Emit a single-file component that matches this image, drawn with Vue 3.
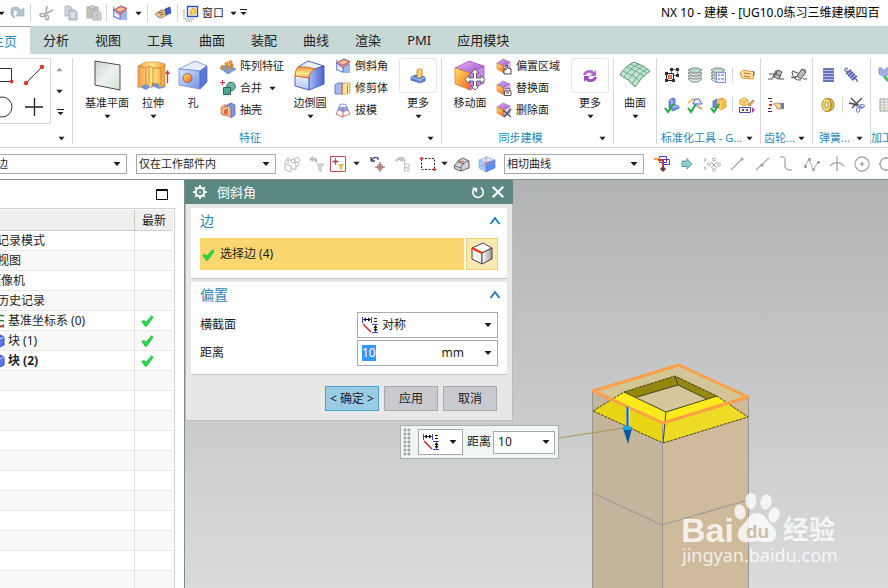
<template>
  <div class="nx">
    <svg class="defs" width="0" height="0" aria-hidden="true">
      <defs>
        <linearGradient id="gBlue" x1="0" y1="0" x2="1" y2="1"><stop offset="0" stop-color="#dbe8ff" /><stop offset="1" stop-color="#6f90e4" /></linearGradient>
        <linearGradient id="gPale" x1="0" y1="0" x2="0" y2="1"><stop offset="0" stop-color="#eaf2ff" /><stop offset="1" stop-color="#b4c6ec" /></linearGradient>
        <linearGradient id="gDeep" x1="0" y1="0" x2="1" y2="0"><stop offset="0" stop-color="#a9bdf8" /><stop offset="1" stop-color="#4664d0" /></linearGradient>
        <linearGradient id="gGold" x1="0" y1="0" x2="1" y2="0"><stop offset="0" stop-color="#f79a4a" /><stop offset=".5" stop-color="#ffe98a" /><stop offset="1" stop-color="#f0a038" /></linearGradient>
        <linearGradient id="gStrip" x1="0" y1="0" x2="0" y2="1"><stop offset="0" stop-color="#f5934e" /><stop offset=".6" stop-color="#ffec8a" /><stop offset="1" stop-color="#f7a04c" /></linearGradient>
        <linearGradient id="gFire" x1="0" y1="0" x2="1" y2="1"><stop offset="0" stop-color="#ffe45a" /><stop offset="1" stop-color="#f2642c" /></linearGradient>
        <linearGradient id="gPurple" x1="0" y1="0" x2="1" y2="1"><stop offset="0" stop-color="#e0b0f0" /><stop offset="1" stop-color="#a259c8" /></linearGradient>
        <linearGradient id="gPlane" x1="0" y1="0" x2="1" y2="1"><stop offset="0" stop-color="#c9d6cd" /><stop offset=".5" stop-color="#eef0f0" /><stop offset="1" stop-color="#cfe6d4" /></linearGradient>
        <linearGradient id="gCube" x1="0" y1="0" x2="1" y2="0"><stop offset="0" stop-color="#fff" /><stop offset="1" stop-color="#999" /></linearGradient>
      </defs>
    </svg>

    <header class="quick-bar">
      <div class="quick-tools">
        <template v-for="(tool, i) in quickTools" :key="i">
          <span v-if="tool.sep" class="quick-sep"></span>
          <button v-else type="button" :class="['quick-btn', tool.cls]" :aria-label="tool.label">
            <Icon :name="tool.icon" :size="tool.size || 16" />
            <span v-if="tool.text">{{ tool.text }}</span>
          </button>
        </template>
      </div>
      <div class="app-title">NX 10 - 建模 - [UG10.0练习三维建模四百</div>
    </header>

    <nav class="tabs">
      <a v-for="tab in tabs" :key="tab" href="#" :class="['tab', { active: tab === '主页' }]"><span>{{ tab }}</span></a>
    </nav>

    <section class="ribbon">
      <div class="group">
        <div class="group-body">
          <div class="gallery">
            <button v-for="g in ['rect', 'line', 'circle', 'plus']" :key="g" type="button" :aria-label="g"><Icon :name="g" :size="24" /></button>
          </div>
          <div class="gallery-scroll">
            <button type="button" aria-label="up"><Icon name="up" :size="7" /></button>
            <button type="button" aria-label="down"><Icon name="down" :size="7" /></button>
            <button type="button" aria-label="all"><Icon name="downBar" :size="8" /></button>
          </div>
        </div>
        <div class="group-foot"><span></span><Icon name="down" :size="7" /></div>
      </div>

      <div v-for="group in groups" :key="group.id" :class="['group', 'group-' + group.id]">
        <div class="group-body">
          <template v-for="(part, i) in group.parts" :key="i">
            <button v-if="part.big" type="button" :class="['big', part.cls]">
              <span class="big-icon"><Icon :name="part.big" :size="part.cls === 'more' ? 16 : 32" /></span>
              <span class="big-text">{{ part.text }}</span>
              <Icon v-if="!part.plain" name="down" :size="7" />
            </button>
            <div v-else class="small-list">
              <button v-for="s in part.list" :key="s.text" type="button" class="small">
                <Icon :name="s.icon" :size="16" />
                <span>{{ s.text }}</span>
                <Icon v-if="s.drop" name="down" class="small-drop" :size="7" />
              </button>
            </div>
          </template>
        </div>
        <div v-if="group.label" class="group-foot"><span>{{ group.label }}</span><Icon name="down" :size="7" /></div>
      </div>

      <div v-for="group in miniGroups" :key="group.label" class="group mini">
        <div class="group-body mini-body">
          <div v-for="(row, r) in group.rows" :key="r" class="mini-row">
            <template v-for="name in row" :key="name">
              <span v-if="name === '|'" class="mini-sep"></span>
              <button v-else type="button" :aria-label="name"><Icon :name="name" :size="16" /></button>
            </template>
          </div>
        </div>
        <div class="group-foot"><span>{{ group.label }}</span><Icon v-if="!group.last" name="down" :size="7" /></div>
      </div>
    </section>

    <section class="select-bar">
      <div class="combo combo-filter">
        <select aria-label="类型过滤器"><option>边</option></select>
        <Icon name="down" :size="8" />
      </div>
      <div class="combo combo-scope">
        <select aria-label="选择范围"><option>仅在工作部件内</option></select>
        <Icon name="down" :size="8" />
      </div>
      <button v-for="t in selectTools" :key="t.icon + t.cls" type="button" :class="['sel-btn', t.cls]" :aria-label="t.icon">
        <Icon :name="t.icon" :size="t.icon === 'down' ? 7 : 16" />
      </button>
      <div class="combo combo-curve">
        <select aria-label="曲线规则"><option>相切曲线</option></select>
        <Icon name="down" :size="8" />
      </div>
      <button v-for="name in snapTools" :key="name" type="button" class="sel-btn" :aria-label="name"><Icon :name="name" :size="16" /></button>
    </section>

    <main class="work">
      <aside class="navigator">
        <div class="nav-head"><button type="button" class="maximize" aria-label="最大化"></button></div>
        <div class="tree">
          <table>
            <thead>
              <tr><th></th><th class="latest">最新</th></tr>
            </thead>
            <tbody>
              <tr v-for="(row, i) in treeRows" :key="i" :class="{ current: row.current }">
                <td>
                  <div :class="['node', 'level-' + (row.level || 0)]">
                    <Icon v-if="row.icon" :name="row.icon" :size="16" />
                    <span>{{ row.text }}</span>
                  </div>
                </td>
                <td class="latest"><Icon v-if="row.ok" name="check" :size="13" /></td>
              </tr>
            </tbody>
          </table>
        </div>
      </aside>

      <div class="canvas">
        <svg class="model" width="703" height="408" viewBox="185 180 703 408">
          <polygon points="593,391 663,423 663,588 593,588" fill="#c4b49c" />
          <polygon points="663,423 748,397 748,588 663,588" fill="#cfbb9b" />
          <polygon points="593,391 679,365 748,397 663,423" fill="#d3c596" />
          <polygon points="624,392 675,376 678,385 636,398" fill="#94860f" />
          <polygon points="675,376 717,396 707,399 678,385" fill="#94860f" />
          <polygon points="636,398 678,385 707,399 666,412" fill="#d5c79a" />
          <polygon points="593,411 624,392 666,412 663,443" fill="#e8d616" />
          <polygon points="663,443 666,412 717,396 748,417" fill="#eddb26" />
          <polygon points="613,399 624,392 666,412 717,396 725,402 663,423" fill="#fcea1c" />
          <g fill="none" stroke="#4a4420" stroke-width="1">
            <path d="M593 411L624 392L675 376L717 396L748 417L663 443Z" stroke-dasharray="3 1" />
            <path d="M624 392L666 412L717 396M666 412L663 443M675 376L678 385L707 399M678 385L637 397" />
          </g>
          <path d="M592.5 391V588M662.5 423V588M748.5 397V588M593 493L662 525L748 500" fill="none" stroke="#97979b" stroke-width="1" />
          <polygon points="593,391 679,365 748,397 663,423" fill="none" stroke="#fb9f48" stroke-width="3" stroke-linejoin="round" />
          <path d="M559 438L624 428" stroke="#ab9656" />
          <path d="M628 407V428" stroke="#cfe4ee" stroke-width="3" />
          <path d="M627.500 407V428" stroke="#0b62a0" stroke-width="2" />
          <polygon points="623,428 632,428 628,444" fill="#04579b" />
          <ellipse cx="627.500" cy="428" rx="4.500" ry="2" fill="#12a3f5" />
          <g class="mark">
            <text x="681" y="542" class="mark-logo">Bai</text>
            <ellipse cx="740" cy="512" rx="5.500" ry="7.500" transform="rotate(-8 740 512)" />
            <ellipse cx="751" cy="501" rx="5.500" ry="8" />
            <ellipse cx="766" cy="502" rx="5.500" ry="7.500" transform="rotate(10 766 502)" />
            <ellipse cx="774" cy="515" rx="5.500" ry="7.500" transform="rotate(14 774 515)" />
            <path d="M757 513C762 513 765 516 768 521C772 526 777 529 776 535C775 542 769 543 764 542C759 541 755 541 750 542C743 543 738 541 738 534C738 528 743 525 746 521C749 516 752 513 757 513Z" />
            <text x="746" y="538" class="mark-du">du</text>
            <text x="783" y="539" class="mark-cn">经验</text>
            <text x="682" y="562" class="mark-url">jingyan.baidu.com</text>
          </g>
        </svg>

        <form class="dialog" @submit.prevent>
          <div class="dialog-head">
            <Icon name="gear" :size="14" />
            <h2>倒斜角</h2>
            <button type="button" aria-label="重置"><Icon name="reset" :size="14" /></button>
            <button type="button" aria-label="关闭"><Icon name="close" :size="14" /></button>
          </div>
          <div class="dialog-body">
            <section class="panel">
              <button type="button" class="panel-title"><span>边</span><Icon name="fold" :size="12" /></button>
              <div class="pick-row">
                <div class="pick"><Icon name="check" :size="13" /><span>选择边 (4)</span></div>
                <button type="button" class="pick-btn" aria-label="选择边"><Icon name="edgeCube" :size="24" /></button>
              </div>
            </section>
            <section class="panel">
              <button type="button" class="panel-title"><span>偏置</span><Icon name="fold" :size="12" /></button>
              <div class="field">
                <label for="section">横截面</label>
                <div class="combo combo-section">
                  <Icon name="symmetric" class="lead" :size="16" />
                  <select id="section"><option>对称</option></select>
                  <Icon name="down" :size="8" />
                </div>
              </div>
              <div class="field">
                <label for="distance">距离</label>
                <div class="combo combo-distance">
                  <input id="distance" ref="distanceInput" v-model="distance" type="text" />
                  <span class="unit">mm</span>
                  <Icon name="down" :size="8" />
                </div>
              </div>
            </section>
            <div class="actions">
              <button type="submit" class="ok">&lt; 确定 &gt;</button>
              <button type="button">应用</button>
              <button type="button">取消</button>
            </div>
          </div>
        </form>

        <div class="float-bar">
          <span class="grip"></span>
          <div class="combo float-type">
            <Icon name="symmetric" class="lead" :size="16" />
            <select aria-label="横截面"><option></option></select>
            <Icon name="down" :size="8" />
          </div>
          <label for="float-distance">距离</label>
          <div class="combo float-value">
            <input id="float-distance" v-model="distance" type="text" />
            <Icon name="down" :size="8" />
          </div>
        </div>
      </div>
    </main>
  </div>
</template>

<script setup>
import { h, onMounted, ref } from 'vue'

const cubeSmall = '<path d="M1 5L7 1L14 4L8 8Z" fill="url(#gPurple)" stroke="#9a6ab4" stroke-width=".6"/><path d="M1 5L8 8V15L1 11Z" fill="url(#gFire)" stroke="#c87830" stroke-width=".6"/><path d="M8 8L14 4V11L8 15Z" fill="#e6c4ee" stroke="#9a6ab4" stroke-width=".6"/>'
const tick = '<path d="M1 11L4 15L9 7" fill="none" stroke="#1fa83a" stroke-width="2"/>'
const layers = '<g stroke="#75837d" stroke-width=".9"><path d="M1 12L5 10H11L15 12L11 15H5Z" fill="#dfe9e4"/><path d="M1 9L5 7H11L15 9L11 12H5Z" fill="#cfe0d7"/><path d="M1 6L5 4H11L15 6L11 9H5Z" fill="#cfe0d7"/><path d="M1 3L5 1H11L15 3L11 6H5Z" fill="#bcd8c8"/></g>'
const chamfer = '<path d="M2 6L11 1L17 4V15L8 17L1 13Z" fill="#e9f0ff"/><path d="M9 10L17 6V17H9Z" fill="#9db7f2"/><path d="M2 2V14M1 6L10 1L17 4L9 9L2 6M9 9V16M2 13L9 16" fill="none" stroke="#3a54c4" stroke-width=".9"/><path d="M3 5L10 2L16 4L9 8Z" fill="#f9c49a" stroke="#dd5a30"/><path d="M4 8L9 11L16 6" fill="none" stroke="#e0461e"/>'

const icons = {
  down: '<path d="M.5 2H7.500L4 6Z" fill="#1b1b1b"/>',
  up: '<path d="M.5 6H7.500L4 2Z" fill="#999"/>',
  downBar: '<path d="M1 0H8V1H1ZM1.500 3H7.500L4.500 6Z" fill="#1b1b1b"/>',
  // quick bar
  redo: '<path d="M1 8V5Q1 2 5 2Q9 2 11 5L14 3V11H6L8 8Q7 5 5 5Q3 6 3 9L5 13Q1 12 1 8Z" fill="#b5c3d3" stroke="#97a6b8" stroke-width=".6"/>',
  cut: '<g fill="none" stroke="#aaaba0" stroke-width="1.500"><path d="M9 1L8 9M15 5L7 9"/><ellipse cx="4.500" cy="10" rx="2.500" ry="1.600"/><ellipse cx="9" cy="12.500" rx="1.500" ry="2.200"/></g>',
  copy: '<path d="M2 1H7L9 3V11H2Z" fill="#d3d6dd" stroke="#b4b8c2"/><path d="M6 5H12L14 7V15H6Z" fill="#c6cad4" stroke="#a9afbc"/><path d="M8 8H12M8 10H12M8 12H12" stroke="#eef"/>',
  paste: '<path d="M1 2H12V13H1Z" fill="#c4c2b9" stroke="#b0afa6"/><path d="M4 1H9V4H4Z" fill="#dcdcdc" stroke="#aaa"/><path d="M7 6H13L15 8V15H7Z" fill="#d5d8df" stroke="#adb0bb"/><path d="M9 9H13M9 11H13M9 13H13" stroke="#aab"/>',
  chamfer,
  tag: '<path d="M0 9L6 5L11 5L12 10L6 13L3 12Z" fill="#e2c592" stroke="#8d744a" stroke-width=".8"/><path d="M3 8L8 7M5 10L9 9" stroke="#7d6338"/><path d="M10 4L15 2L16 8L11 10Z" fill="#3d5cc4" stroke="#223a8a" stroke-width=".6"/>',
  window: '<path d="M1 5V14H11M3 16H9" fill="none" stroke="#777" stroke-dasharray="1.500 1"/><path d="M4.500 1.500H14.500V11.500H4.500Z" fill="#fff" stroke="#2c50c8" stroke-width="1.400"/><path d="M7 5L10 3L13 4V8L10 10L7 9Z" fill="#f7bd3a" stroke="#d89a28" stroke-width=".6"/><path d="M7 5L10 6L13 4M10 6V10" stroke="#fff0b0" fill="none" stroke-width=".7"/>',
  // sketch gallery
  rect: '<path d="M1.500 5.500H21.500V18.500H1.500Z" fill="none" stroke="#333"/><circle cx="21.500" cy="18.500" r="2" fill="#d43c30"/>',
  line: '<path d="M4 20L20 4" stroke="#333"/><circle cx="4" cy="20" r="2.200" fill="#d43c30"/><circle cx="20" cy="4" r="2.200" fill="#d43c30"/>',
  circle: '<circle cx="12" cy="12" r="10" fill="none" stroke="#333"/>',
  plus: '<path d="M3 12H21M12.500 3V21" stroke="#222" stroke-width="1.300"/>',
  // large ribbon tools
  datum: '<path d="M4 1L29 5V30L4 25Z" fill="url(#gPlane)" stroke="#4a4f4c"/>',
  extrude: '<path d="M1 26L9 22L24 22L29 27L22 29L15 26L9 30Z" fill="#6f95e0"/><path d="M1 6L9 2H21L28 4V26L22 27V24L15 23V28L9 24L1 28Z" fill="url(#gGold)" stroke="#d0883c" stroke-width=".7"/><path d="M1 6L9 8L12 6L16 8L24 8L28 5M9 8V24M12 6V24M16 8V27M24 8V25" fill="none" stroke="#c97a34" stroke-width=".8"/><path d="M30.500 23V12" stroke="#c93a30" stroke-width="1.300"/><path d="M28 14H33L30.500 10Z" fill="#c93a30"/>',
  hole: '<path d="M2 9L18 1L30 6L23 11Z" fill="#e6eeff" stroke="#6f88d4" stroke-width=".8"/><path d="M2 9L23 11V29L2 25Z" fill="url(#gBlue)" stroke="#6f88d4" stroke-width=".8"/><path d="M23 11L30 6V22L23 29Z" fill="#5a76d8" stroke="#5570c8" stroke-width=".8"/><circle cx="10.500" cy="18" r="4.500" fill="url(#gFire)" stroke="#6a5a88" stroke-width=".8"/>',
  blend: '<path d="M4 7L14 1L30 6L18 10Z" fill="#e8f0ff" stroke="#3c56b8" stroke-width=".9"/><path d="M15 18Q15 12 18 10L30 6V24L15 30Z" fill="url(#gDeep)" stroke="#3c56b8" stroke-width=".9"/><path d="M1 15L15 18V30L1 26Z" fill="url(#gPale)" stroke="#3c56b8" stroke-width=".9"/><path d="M4 7Q11 6 22 9Q15 11 15 18L1 16Q1 10 4 7Z" fill="url(#gStrip)" stroke="#d5662c" stroke-width=".9"/>',
  moveFace: '<path d="M1 8L15 1L30 6L16 13Z" fill="url(#gPurple)" stroke="#9a5ab8" stroke-width=".8"/><path d="M1 8L16 13V30L1 24Z" fill="url(#gFire)" stroke="#d88048" stroke-width=".8"/><path d="M16 13L30 6V23L16 30Z" fill="#c98be0" stroke="#9a5ab8" stroke-width=".8"/><path d="M21 9L25 13H22.500V18H27V15.500L31 19.500L27 23.500V21H22.500V26H25L21 30L17 26H19.500V21H15V23.500L11 19.500L15 15.500V18H19.500V13H17Z" fill="#fff" stroke="#555" stroke-width=".9"/>',
  surface: '<path d="M1 15Q6 6 15 2Q24 5 31 11Q23 16 16 27Q10 19 1 15Z" fill="#bfe3cc" stroke="#4b8a6c" stroke-width=".9"/><path d="M4 11Q14 15 21 21M8 7Q17 11 25 16M11 4Q21 8 28 13M5 17Q11 8 20 4M9 20Q15 11 24 6M13 24Q19 14 28 9" fill="none" stroke="#5a9a7c" stroke-width=".8"/>',
  moreFeature: '<path d="M1 9L6 7L15 9V13L10 15L1 12Z" fill="#5d89d4" stroke="#2f569c" stroke-width=".7"/><path d="M1 9L10 12L15 9M10 12V15" fill="none" stroke="#d3e4ff" stroke-width=".6"/><path d="M7 2L9 1H12V8L10 10L7 9Z" fill="url(#gGold)" stroke="#d07830" stroke-width=".7"/>',
  moreSync: '<path d="M1 7Q2 2 8 2Q11 2 12 4L14 2V8H8L10 6Q6 3 4 7Z" fill="#b565d0"/><path d="M15 9Q14 14 8 14Q5 14 4 12L2 14V8H8L6 10Q10 13 12 9Z" fill="#9d4abc"/>',
  // small ribbon tools
  pattern: '<path d="M0 10L6 7L16 11L8 16Z" fill="#7ea2e0" stroke="#426ab4" stroke-width=".6"/><path d="M1 8L3 7V10L1 11ZM5 5L8 4V8L6 9ZM9 3L12 3V7L10 8ZM6 9L8 8V12L6 12ZM11 7L13 6V10L11 11Z" fill="#f6a042" stroke="#c9781c" stroke-width=".8"/>',
  unite: '<circle cx="11" cy="6.500" r="4.300" fill="#6fb5a4" stroke="#29645a"/><path d="M3.500 7.500H10.500V14.500H3.500Z" fill="#4aa593" stroke="#29645a"/><path d="M0 2.500H5M2.500 0V5" stroke="#d1352c"/>',
  shell: '<path d="M1 5L5 2V14L1 12Z" fill="#f2be8c" stroke="#c9825c" stroke-width=".6"/><path d="M5 4L11 1L15 3V13L11 16L11 5Z" fill="#7b96e2" stroke="#4c5fae" stroke-width=".7"/><path d="M2 6L10 4V15L2 12Z" fill="#f3cfae" stroke="#c5704c" stroke-width=".8"/><path d="M4 12V8L8 6V13Z" fill="#e06a40"/>',
  chamferSmall: chamfer,
  trim: '<path d="M0 5L3 3H8V13L7 14H0Z" fill="#a3baf2" stroke="#4766c4" stroke-width=".8"/><path d="M7 5L9 3H15V12L13 14H7Z" fill="#ffe9a4" stroke="#e0583c" stroke-width=".9" stroke-dasharray="1.500 1"/><path d="M7 4V14M12.500 5V13" stroke="#e0583c" stroke-width=".9"/>',
  draft: '<path d="M5 4L1 12L7 15L15 12L11 4" fill="none" stroke="#d0604a" stroke-width=".9"/><ellipse cx="8" cy="4" rx="4" ry="2" fill="#e6eeff" stroke="#6f88d0" stroke-width=".8"/><path d="M4 5L3 8Q8 11 13 8L12 5Q8 8 4 5Z" fill="#8faae8" stroke="#6f88d0" stroke-width=".6"/><path d="M8 5V15" stroke="#d0604a"/>',
  offsetRegion: cubeSmall + '<path d="M8 16V11L10 12V7H11.500V10L15 11V16Z" fill="#fff" stroke="#333" stroke-width=".9"/>',
  replaceFace: cubeSmall + '<path d="M8.500 11H15V15.500H8.500ZM9 9Q12 7 14 9" fill="#fff" stroke="#444" stroke-width=".9"/><path d="M10 13H13" stroke="#444"/>',
  deleteFace: cubeSmall + '<path d="M7 8L15 15M15 7L8 15" stroke="#555" stroke-width="1.400"/>',
  // toolboxes
  stdFrame: '<path d="M7.500 2.500H13.500V8.500H7.500Z" fill="#f2f2f2" stroke="#777"/><path d="M2.500 6.500H9.500V13.500H2.500Z" fill="#fff" stroke="#222"/><path d="M4.500 8.500H7.500V11.500H4.500Z" fill="#f8c34a" stroke="#d43c30"/><path d="M6 1H9V4H6ZM12 1H15V4H12ZM12 7H15V10H12ZM1 5H4V8H1ZM1 12H4V15H1ZM8 12H11V15H8Z" fill="#333"/>',
  layerStack: layers,
  layerList: layers + '<path d="M6.500 5.500H15.500V15.500H6.500Z" fill="#eef2ff" stroke="#7f92e0"/><path d="M8 8H10M11 8H14M8 12H10M11 12H14" stroke="#5068d0"/>',
  label: '<path d="M1 6L4 3L15 5L14 12L3 11Z" fill="#ffdf9c" stroke="#d89a48"/><path d="M5 6L12 7M5 9L11 10" stroke="#a8782c"/><path d="M14 4Q17 7 14 9" stroke="#555" fill="none"/>',
  checkPart: '<path d="M5 3L9 1L11 2V8L15 9V11L9 14L5 11Z" fill="#6c96e4" stroke="#3a5cac" stroke-width=".7"/><path d="M5 3L8 4V10L15 9" fill="none" stroke="#cfe0ff" stroke-width=".8"/>' + tick,
  checkDraft: '<path d="M1 6L6 2L9 4" fill="none" stroke="#e8b048" stroke-width="1.500"/><path d="M6 7L8 2H12L15 7Z" fill="#eef" stroke="#4d62d8"/><path d="M7 7L15 12" stroke="#9cc4f0" stroke-width="2.500"/><path d="M11 9L15 12" stroke="#efb038" stroke-width="1.500"/>' + tick,
  checkCube: '<path d="M3 4L7 2V10L3 11Z" fill="#6d90e2" stroke="#3759b4" stroke-width=".7"/><path d="M7 3L12 1L16 3V10L11 13L7 10Z" fill="#f7b93f" stroke="#cf9428" stroke-width=".7"/><path d="M7 4L11 5L16 3M11 5V13" fill="none" stroke="#ffe6a0" stroke-width=".8"/>' + tick,
  rename: '<path d="M1 3L5 1L9 3V7L5 9L1 7Z" fill="#ffe08a" stroke="#d8a030"/><path d="M1 3L5 5L9 3M5 5V9" fill="none" stroke="#d8a030" stroke-width=".8"/><path d="M.5 10.500H11.500V15.500H.5Z" fill="#fff" stroke="#43489a"/><path d="M3 13H5M7 13H9" stroke="#222" stroke-width="1.500"/><path d="M9 8L14 3L15 4L11 9Z" fill="#f0a858" stroke="#a86530" stroke-width=".7"/><path d="M13 10L16 13L13 16Z" fill="#b13cae"/>',
  gearA: '<path d="M0 12H4L8 4H12M11 12H16" fill="none" stroke="#555" stroke-width="1.200"/><path d="M6 10L10 3L14 5L11 12Z" fill="#bbb" stroke="#555"/><path d="M1 7H6M8 7L12 9" stroke="#555"/>',
  gearB: '<path d="M0 10Q5 12 8 7L11 3H15M1 4L7 6M12 12H16" fill="none" stroke="#555" stroke-width="1.200"/><path d="M6 9L11 2L15 5L10 12Z" fill="#bbb" stroke="#555"/><path d="M1 5Q2 14 10 13" fill="none" stroke="#555"/>',
  gearHand: '<path d="M0 1.500H4M2 4.500H4M0 11.500H3M0 14.500H4" stroke="#333"/><path d="M1 8H4" stroke="#d8392c" stroke-width="2"/><path d="M5 7L9 6L13 6V12L9 12L8 9Z" fill="#f0d0a2" stroke="#ab8554" stroke-width=".7"/><path d="M13 6H16V12H13Z" fill="#6a78c8"/>',
  springA: '<path d="M3 2H14M3 5H14M3 8H14M3 11H14M3 14H14" stroke="#3d4a9c" stroke-width="1.600"/><path d="M3 3.500H14M3 6.500H14M3 9.500H14M3 12.500H14" stroke="#b4bce4" stroke-width="1"/>',
  springB: '<path d="M5 4L12 12" stroke="#a3b0e0" stroke-width="6"/><path d="M3 7L8 3M5 9L10 5M7 11L12 7M9 13L14 9" stroke="#3f4f9c" stroke-width="1.300"/><path d="M5 4Q1 5 2 2Q3 0 5 2M12 12Q15 12 14 15" fill="none" stroke="#2f3f8c"/>',
  disc: '<path d="M7 1.500Q14 1 14 8Q14 14 7 14.500" fill="#ddc05c" stroke="#9a8028" stroke-width=".9"/><path d="M10 2Q13 8 10 14" stroke="#9a8028" fill="none" stroke-width=".8"/><ellipse cx="6.500" cy="8" rx="4.500" ry="6.500" fill="#f6da70" stroke="#9a8028" stroke-width=".9"/><ellipse cx="6.500" cy="8" rx="1.500" ry="3" fill="#fff" stroke="#8b7320" stroke-width=".8"/>',
  springCut: '<path d="M7 8L14 11" stroke="#9aaae0" stroke-width="3"/><path d="M2 1L9 8M13 1L3 11M0 6L9 8" stroke="#444" stroke-width="1.300"/><ellipse cx="13" cy="9" rx="2.500" ry="1.600" fill="none" stroke="#6a7cc4"/><ellipse cx="9" cy="13" rx="1.600" ry="2.300" fill="none" stroke="#6a7cc4"/>',
  machine: '<path d="M1 1H4V3H8V1H11V7L8 9V11L5 9L1 7Z" fill="#a3b0e4" stroke="#7a8cd0" stroke-width=".8"/><path d="M6 9L9 13L15 5" fill="none" stroke="#3dc058" stroke-width="2.500"/>',
  sheet: '<path d="M2 2H14V14H2Z" fill="#f1f1ec" stroke="#999"/><path d="M2 5H14M2 8H14M2 11H14M6 2V14" stroke="#bbb"/><path d="M9 7H16V13H9Z" fill="#ffe08a"/>',
  // selection bar
  asmGray: '<g fill="none" stroke="#b9b9b9"><path d="M1 5V14L7 16V10L1 8M7 12L12 14V9M4 1V9M1 4H8"/><circle cx="9" cy="5" r="2"/><circle cx="13" cy="4" r="2.500"/><circle cx="13" cy="8" r="2"/></g>',
  filterGray: '<path d="M0 3L4 0V2H7Q9 3 8 6H6Q6 4 4 4V6Z" fill="#bbb"/><path d="M8 8H15L12 11V16L10 14V11Z" fill="#ddd" stroke="#bdbdbd"/>',
  filterRed: '<path d="M.5 .5H15.500V15.500H.5Z" fill="#fff" stroke="#c8405a"/><circle cx="5.500" cy="5.500" r="1.500" fill="none" stroke="#c43030" stroke-width=".8"/><path d="M2 5.500H9M5.500 2V9" stroke="#8b3a3a" stroke-width=".7"/><path d="M8 8H14L12 11V14.500L10 13V11Z" fill="#f6b53c"/>',
  snapUndo: '<path d="M1 5V1M1 5H5M1 5Q4 0 8 2V4" fill="none" stroke="#3c427f" stroke-width="1.300"/><circle cx="10" cy="11" r="2.500" fill="none" stroke="#cf4a40"/><path d="M5 11H15M10 6V16" stroke="#6b3a42" stroke-width=".8"/>',
  chainGray: '<path d="M0 4L4 1H9L11 5L7 6L4 4L1 6Z" fill="#c4c4c4"/><path d="M9.500 6V15.500M9.500 8H14V11H9.500M9.500 12H14V15H9.500" fill="none" stroke="#c0c0c0"/>',
  marquee: '<path d="M1.500 2.500H14.500V13.500H1.500Z" fill="none" stroke="#222" stroke-dasharray="2 1.500"/><circle cx="1.500" cy="2.500" r="1.600" fill="#d83a30"/><circle cx="14.500" cy="13.500" r="1.600" fill="#d83a30"/>',
  solidGray: '<path d="M0 10L5 4L9 2L15 5V12L7 15L1 13Z" fill="#d0d4de" stroke="#555" stroke-width=".9"/><path d="M1 10L7 12Q8 7 14 5M7 12V15M4 6L10 8" fill="none" stroke="#555" stroke-width=".8"/><path d="M5 5L10 6" stroke="#d24b3a"/>',
  solidBlue: '<path d="M0 4L8 1L16 4L7 7Z" fill="#dbe6ff" stroke="#8ba4ea" stroke-width=".7"/><path d="M0 4L7 7V16L0 12Z" fill="#a9c8fb" stroke="#8ba4ea" stroke-width=".7"/><path d="M7 7L16 4V12L7 16Z" fill="#5e8cec" stroke="#6584d8" stroke-width=".7"/><path d="M7 0V8L13 6M7 8L2 10" fill="none" stroke="#e0708a" stroke-width=".8"/>',
  intent: '<path d="M5.500 .5H12.500V6.500H5.500ZM9.500 3.500H15.500V8.500H9.500Z" fill="#fff" stroke="#3a48d8"/><path d="M0 3H6" stroke="#f0a83c" stroke-width="2"/><path d="M4 4H9V12" fill="none" stroke="#d0352c" stroke-width="2"/><path d="M9 10L12 13L9 16L6 13Z" fill="#7a3a3a"/>',
  arrowRight: '<path d="M3 5H8V2.500L13 8L8 13V10.500H3Z" fill="#92ccd2" stroke="#5a98a8"/>',
  snapAll: '<path d="M0 2L3 4L0 6ZM0 10L3 12L0 14Z" fill="#c4c4c4"/><g fill="none" stroke="#aaa"><circle cx="10" cy="3.500" r="1.500"/><circle cx="10" cy="13.500" r="1.500"/><circle cx="5" cy="8.500" r="1.500"/><circle cx="15" cy="8.500" r="1.500"/><path d="M7 6L13 12M13 6L7 12"/></g>',
  snapEnd: '<path d="M2 14L13 3" stroke="#aaa" stroke-width="1.200"/><circle cx="13" cy="3" r="1.600" fill="#aaa"/>',
  snapMid: '<path d="M2 14L15 2" stroke="#aaa" stroke-width="1.200"/><circle cx="8" cy="9" r="1.800" fill="#aaa"/>',
  snapCurve: '<path d="M1 1Q7 0 6 5V10Q6 14 13 14" fill="none" stroke="#aaa" stroke-width="1.300"/>',
  snapPole: '<path d="M1 10L5 3L9 14L14 6" fill="none" stroke="#aaa"/><path d="M0 9H3V12H0ZM4 2H7V5H4ZM8 12H11V15H8ZM13 5H16V8H13Z" fill="#aaa"/>',
  snapCross: '<path d="M8 0V15M1 10Q8 3 15 10" fill="none" stroke="#aaa" stroke-width="1.300"/>',
  snapCenter: '<circle cx="8" cy="8" r="7" fill="none" stroke="#aaa" stroke-width="1.300"/><path d="M8 6V10M6 8H10" stroke="#aaa" stroke-width="1.600"/>',
  snapQuad: '<circle cx="7" cy="8" r="6" fill="none" stroke="#aaa" stroke-width="1.300"/><path d="M0 7H2V9H0ZM6 1H8V3H6ZM6 13H8V15H6Z" fill="#aaa"/>',
  // navigator
  csys: '<path d="M9 2L15 3M8 7L15 8M7 12L15 14" stroke="#2a7d35" stroke-width="1.400"/><path d="M15 12L9 15" stroke="#cc372c" stroke-width="1.500"/>',
  block: '<path d="M3 4L9 1L15 4V12L9 15L3 12Z" fill="#5a78f0" stroke="#3450c0"/><path d="M3 4L9 7L15 4" fill="none" stroke="#c6d2ff"/>',
  check: '<path d="M1 9L4 8L6 10L13 2L15 4L7 15L5 15Z" fill="#22dd44" stroke="#18a830" stroke-width=".8"/>',
  // chamfer dialog
  gear: '<circle cx="8" cy="8" r="4.800" fill="none" stroke="#fff" stroke-width="2.200"/><circle cx="8" cy="8" r="1" fill="#fff"/><path d="M8 0V3M8 13V16M0 8H3M13 8H16M2.500 2.500L4 4M12 12L13.500 13.500M13.500 2.500L12 4M4 12L2.500 13.500" stroke="#fff" stroke-width="2.400"/>',
  reset: '<path d="M11 3A6 6 0 1 1 3 5" fill="none" stroke="#fff" stroke-width="1.800"/><path d="M1 3H7V9Z" fill="#fff"/>',
  close: '<path d="M2 2L14 14M14 2L2 14" stroke="#fff" stroke-width="2.600"/>',
  fold: '<path d="M2 12L8 4L14 12" fill="none" stroke="#2080b8" stroke-width="2.600"/>',
  edgeCube: '<path d="M2 6L13 1L22 6L12 11Z" fill="#fff" stroke="#444"/><path d="M2 6L12 11V22L2 17Z" fill="#f4f4f4" stroke="#444"/><path d="M12 11L22 6V17L12 22Z" fill="url(#gCube)" stroke="#444"/><path d="M2 6L12 11" stroke="#f03a18" stroke-width="2.200"/>',
  symmetric: '<path d="M.5 0V6M9.500 0V6M10 7.500H16M10 15.500H16" stroke="#3a3fd8"/><path d="M2 2.500H8M13.500 9V14M12 1.500H15M12 4.500H15" stroke="#111"/><path d="M1 2.500L4 .5V4.500ZM9 2.500L6 .5V4.500ZM13.500 8L11.500 11H15.500ZM13.500 15L11.500 12H15.500Z" fill="#111"/><path d="M1 7L9 15" stroke="#cf2028" stroke-width="1.400"/>'
}

const boxes = {
  down: 8,
  up: 8,
  downBar: 8,
  chamfer: 18,
  chamferSmall: 18,
  rect: 24,
  line: 24,
  circle: 24,
  plus: 24,
  edgeCube: 24,
  datum: 32,
  extrude: 32,
  hole: 32,
  blend: 32,
  moveFace: 32,
  surface: 32
}

function Icon(props) {
  const box = boxes[props.name] || 16
  return h('svg', {
    class: 'icon',
    width: props.size,
    height: props.size,
    viewBox: `0 0 ${box} ${box}`,
    'aria-hidden': 'true',
    innerHTML: icons[props.name]
  })
}
Icon.props = ['name', 'size']

const quickTools = [
  { icon: 'down', size: 7, cls: 'edge', label: '撤销列表' },
  { icon: 'redo', label: '重做' },
  { sep: true },
  { icon: 'cut', cls: 'roomy', label: '剪切' },
  { icon: 'copy', label: '复制' },
  { icon: 'paste', label: '粘贴' },
  { sep: true },
  { icon: 'chamfer', label: '倒斜角' },
  { icon: 'down', size: 7, cls: 'drop', label: '更多命令' },
  { sep: true },
  { icon: 'tag', cls: 'roomy', label: '触控' },
  { sep: true },
  { icon: 'window', text: '窗口', cls: 'wide', label: '窗口' },
  { icon: 'down', size: 7, cls: 'narrow', label: '窗口列表' },
  { icon: 'downBar', size: 8, cls: 'narrow', label: '自定义' }
]

const tabs = ['主页', '分析', '视图', '工具', '曲面', '装配', '曲线', '渲染', 'PMI', '应用模块']

const groups = [
  {
    id: 'feature',
    label: '特征',
    parts: [
      { big: 'datum', text: '基准平面' },
      { big: 'extrude', text: '拉伸' },
      { big: 'hole', text: '孔', cls: 'slim', plain: true },
      { list: [{ icon: 'pattern', text: '阵列特征' }, { icon: 'unite', text: '合并', drop: true }, { icon: 'shell', text: '抽壳' }] },
      { big: 'blend', text: '边倒圆' },
      { list: [{ icon: 'chamferSmall', text: '倒斜角' }, { icon: 'trim', text: '修剪体' }, { icon: 'draft', text: '拔模' }] },
      { big: 'moreFeature', text: '更多', cls: 'more' }
    ]
  },
  {
    id: 'sync',
    label: '同步建模',
    parts: [
      { big: 'moveFace', text: '移动面', plain: true },
      { list: [{ icon: 'offsetRegion', text: '偏置区域' }, { icon: 'replaceFace', text: '替换面' }, { icon: 'deleteFace', text: '删除面' }] },
      { big: 'moreSync', text: '更多', cls: 'more' }
    ]
  },
  { id: 'surface', parts: [{ big: 'surface', text: '曲面' }] }
]

const miniGroups = [
  { label: '标准化工具 - G...', rows: [['stdFrame', 'layerStack', 'layerList', '|', 'label'], ['checkPart', 'checkDraft', 'checkCube', '|', 'rename']] },
  { label: '齿轮...', rows: [['gearA', 'gearB'], ['gearHand']] },
  { label: '弹簧...', rows: [['springA', 'springB'], ['disc', '|', 'springCut']] },
  { label: '加工', rows: [['machine'], ['sheet']], last: true }
]

const selectTools = [
  { icon: 'asmGray' },
  { icon: 'filterGray' },
  { icon: 'filterRed', cls: 'tight' },
  { icon: 'down', cls: 'drop' },
  { icon: 'snapUndo' },
  { icon: 'chainGray' },
  { icon: 'marquee' },
  { icon: 'down', cls: 'drop-slim' },
  { icon: 'solidGray' },
  { icon: 'solidBlue' }
]
const snapTools = ['intent', 'arrowRight', 'snapAll', 'snapEnd', 'snapMid', 'snapCurve', 'snapPole', 'snapCross', 'snapCenter', 'snapQuad']

const treeRows = [
  { text: '历史记录模式' },
  { text: '模型视图' },
  { text: '摄像机', level: 1 },
  { text: '模型历史记录' },
  { text: '基准坐标系 (0)', level: 2, icon: 'csys', ok: true },
  { text: '块 (1)', level: 2, icon: 'block', ok: true },
  { text: '块 (2)', level: 2, icon: 'block', ok: true, current: true },
  ...Array.from({ length: 30 }, () => ({}))
]

const distance = ref('10')
const distanceInput = ref(null)

onMounted(() => {
  distanceInput.value.focus()
  distanceInput.value.select()
})
</script>

<style>
body {
  margin: 0;
  overflow: hidden;
}
</style>

<style scoped>
.nx {
  height: 100vh;
  display: flex;
  flex-direction: column;
  overflow: hidden;
  background: #fff;
  color: #1c1c1c;
  font-family: "Noto Sans", "Noto Sans CJK SC", sans-serif;
  font-size: 12px;
  line-height: 16px;
}

.defs {
  position: absolute;
}

button,
input,
select {
  font: inherit;
  color: inherit;
  padding: 0;
  margin: 0;
  border: 0;
  background: none;
  outline: none;
  border-radius: 0;
}

.icon {
  display: block;
  flex-shrink: 0;
  overflow: visible;
}

.quick-bar {
  display: flex;
  align-items: center;
  justify-content: space-between;
  height: 26px;
  flex-shrink: 0;
}

.quick-tools {
  display: flex;
  align-items: center;
  flex-shrink: 0;
}

.quick-btn {
  width: 23px;
  height: 24px;
  display: flex;
  align-items: center;
  justify-content: center;
  gap: 3px;
  font-size: 11px;
  white-space: nowrap;
}

.quick-btn.edge {
  width: 10px;
  margin-left: -4px;
}

.quick-btn.drop {
  width: 15px;
}

.quick-btn.roomy {
  width: 27px;
}

.quick-btn.wide {
  width: 49px;
}

.quick-btn.narrow {
  width: 10px;
}

.quick-sep {
  width: 1px;
  height: 18px;
  background: #d6d6d6;
  margin: 0 1px;
}

.app-title {
  width: 227px;
  flex-shrink: 0;
  overflow: hidden;
  white-space: nowrap;
  color: #000;
}

.tabs {
  display: flex;
  height: 28px;
  flex-shrink: 0;
  background: #c8d8d6;
}

.tab {
  padding: 0 13px;
  font-size: 13px;
  line-height: 28px;
  color: #222;
  text-decoration: none;
  white-space: nowrap;
}

.tab.active {
  box-sizing: border-box;
  margin-left: -22px;
  background: #fff;
  color: #2a8ab8;
  border-top: 1px solid #a3a8a8;
}

.ribbon {
  display: flex;
  flex-shrink: 0;
  height: 86px;
  padding: 4px 0 3px;
  border-bottom: 1px solid #d8d8d8;
}

.group {
  display: flex;
  flex-direction: column;
  justify-content: space-between;
  flex-shrink: 0;
  border-right: 1px solid #d8d8d8;
}

.group-body {
  display: flex;
}

.group-feature .group-body {
  padding: 0 4px 0 11px;
}

.group-sync .group-body {
  padding: 0 4px 0 6px;
}

.group-foot {
  display: flex;
  align-items: center;
  height: 12px;
  padding-right: 7px;
  font-size: 11px;
  line-height: 12px;
  color: #2a86b8;
}

.group-foot span {
  flex: 1;
  text-align: center;
  white-space: nowrap;
}

.gallery {
  display: grid;
  grid-template-columns: 32px 32px;
  justify-content: end;
  width: 50px;
  overflow: hidden;
  border: 1px solid #d8d8d8;
  border-left: 0;
}

.gallery button {
  height: 32px;
  display: flex;
  align-items: center;
  justify-content: center;
}

.gallery-scroll {
  width: 21px;
  display: flex;
  flex-direction: column;
}

.gallery-scroll button {
  flex: 1;
  padding-left: 5px;
}

.big {
  width: 46px;
  display: flex;
  flex-direction: column;
  align-items: center;
  font-size: 11px;
}

.big.slim {
  width: 34px;
}

.group-feature .small-list + .big {
  width: 44px;
}

.group-sync .big {
  width: 44px;
}

.group-surface .big {
  width: 42px;
}

.group-feature .big.more,
.group-sync .big.more {
  width: 38px;
  margin-left: 11px;
}

.big-icon {
  height: 35px;
  display: flex;
  align-items: center;
  justify-content: center;
}

.big.more .big-icon {
  box-sizing: border-box;
  width: 38px;
  border: 1px solid #e4e4e4;
  border-radius: 3px;
}

.big-text {
  margin: 2px 0;
  white-space: nowrap;
}

.small-list {
  display: flex;
  flex-direction: column;
  gap: 6px;
  margin-left: 3px;
}

.group-sync .small-list {
  margin-left: 4px;
}

.slim + .small-list {
  margin: 0 4px 0 10px;
}

.small {
  display: flex;
  align-items: center;
  gap: 4px;
  height: 16px;
  font-size: 11px;
  white-space: nowrap;
}

.small-drop {
  margin-left: 3px;
}

.mini-body {
  flex-direction: column;
  gap: 14px;
  padding: 9px 5px 0 7px;
}

.mini-row {
  display: flex;
  gap: 7px;
}

.mini-row button {
  width: 16px;
  height: 16px;
}

.mini-sep {
  width: 1px;
  margin: 0 -1px;
  background: #d8d8d8;
}

.select-bar {
  display: flex;
  align-items: center;
  flex-shrink: 0;
  height: 31px;
  border-bottom: 1px solid #849496;
}

.combo {
  box-sizing: border-box;
  position: relative;
  display: flex;
  align-items: center;
  flex-shrink: 0;
  height: 20px;
  padding-right: 5px;
  border: 1px solid #a8a8a8;
  background: #fff;
}

.combo select {
  flex: 1;
  min-width: 0;
  height: 100%;
  padding-left: 2px;
  appearance: none;
}

.combo input {
  flex: 1;
  min-width: 0;
  padding-left: 4px;
}

.combo > .icon {
  pointer-events: none;
}

.select-bar .combo {
  font-size: 11px;
}

.combo-filter {
  width: 133px;
  margin: 0 9px 0 -6px;
}

.combo-scope {
  width: 140px;
  margin-right: 3px;
}

.combo-curve {
  width: 140px;
  margin: 0 5px;
}

.sel-btn {
  width: 25px;
  height: 20px;
  flex-shrink: 0;
  display: flex;
  align-items: center;
  justify-content: center;
}

.sel-btn.tight,
.sel-btn.drop {
  width: 18px;
}

.sel-btn.drop-slim {
  width: 9px;
}

.work {
  flex: 1;
  min-height: 0;
  display: flex;
}

.navigator {
  width: 184px;
  flex-shrink: 0;
  overflow: hidden;
  border-right: 1px solid #7f8c8e;
}

.nav-head {
  height: 28px;
  display: flex;
  align-items: center;
  justify-content: flex-end;
  padding-right: 16px;
}

.maximize {
  box-sizing: border-box;
  width: 12px;
  height: 11px;
  border: 1px solid #111;
  border-top-width: 2px;
}

.tree {
  margin-right: 9px;
  padding: 1px 1px 0 0;
  border: 1px solid #d0d0d0;
  border-left: 0;
}

.tree table {
  width: 100%;
  table-layout: fixed;
  border-collapse: separate;
  border-spacing: 0;
}

.tree th,
.tree td {
  height: 19px;
  padding: 0;
  line-height: 19px;
  border-bottom: 1px solid #e8e8e8;
  white-space: nowrap;
}

.tree th {
  height: 20px;
  background: #efefef;
  border-bottom-color: #d0d0d0;
  font-weight: 400;
}

.tree .latest {
  width: 38px;
  border-left: 1px solid #e4e4e4;
}

.tree th.latest {
  border-left-color: #c8c8c8;
}

.tree td.latest .icon {
  margin-left: 6px;
}

.tree tbody tr:nth-child(even) {
  background: #f9f9f9;
}

.tree tr.current {
  font-weight: 700;
}

.node {
  height: 19px;
  display: flex;
  align-items: center;
  gap: 3px;
}

.level-0 {
  margin-left: -27px;
}

.level-1,
.level-2 {
  margin-left: -11px;
}

.canvas {
  position: relative;
  flex: 1;
  min-width: 0;
  overflow: hidden;
  background: linear-gradient(#b2b3b5, #dadbdc);
}

.model {
  position: absolute;
  top: 0;
  left: 0;
}

.mark {
  fill: rgba(255, 255, 255, 0.78);
}

.mark-logo {
  font: 700 34px "Liberation Sans", sans-serif;
}

.mark-du {
  font: 700 19px "Liberation Sans", sans-serif;
  fill: #cbbfa9;
}

.mark-cn {
  font: 700 26px "Noto Sans CJK SC", sans-serif;
}

.mark-url {
  font: 18px "Noto Sans", sans-serif;
}

.dialog {
  position: absolute;
  top: 0;
  left: 0;
  width: 328px;
}

.dialog-head {
  display: flex;
  align-items: center;
  height: 24px;
  padding: 0 8px;
  background: #5b8881;
  color: #fff;
}

.dialog-head h2 {
  flex: 1;
  margin: 0 0 0 10px;
  font-size: 13px;
  font-weight: 400;
}

.dialog-head button {
  margin-left: 6px;
}

.dialog-body {
  padding: 4px 5px 9px;
  border: 1px solid #bbb;
  border-top: 0;
  background: #e7e7e7;
}

.panel {
  margin-bottom: 3px;
  padding: 0 9px 8px;
  background: #fff;
  border-bottom: 1px solid #c4c4c4;
}

.panel-title {
  width: 100%;
  height: 26px;
  display: flex;
  align-items: center;
  justify-content: space-between;
  font-size: 14px;
  color: #2a86b8;
}

.panel-title .icon {
  margin-right: -3px;
}

.pick-row {
  display: flex;
  gap: 2px;
  margin-top: 4px;
}

.pick {
  flex: 1;
  display: flex;
  align-items: center;
  gap: 5px;
  height: 32px;
  padding-left: 2px;
  background: #fcd76f;
}

.pick-btn {
  box-sizing: border-box;
  width: 32px;
  height: 32px;
  display: flex;
  align-items: center;
  justify-content: center;
  border: 1px solid #f8cf62;
  background: #fae9b2;
}

.field {
  display: flex;
  align-items: center;
  justify-content: space-between;
  margin-top: 2px;
}

.panel-title + .field {
  margin-top: 4px;
}

.field .combo {
  width: 141px;
  height: 26px;
}

.lead {
  margin-left: 4px;
}

.combo-section select {
  padding-left: 4px;
}

.combo-distance input::selection {
  background: #3399ff;
  color: #fff;
}

.unit {
  margin-right: 20px;
}

.actions {
  display: flex;
  justify-content: flex-end;
  gap: 5px;
  padding: 8px 10px 0 0;
}

.actions button {
  box-sizing: border-box;
  width: 54px;
  height: 25px;
  border: 1px solid #a9a9ab;
  background: #c9cacf;
  white-space: nowrap;
}

.actions .ok {
  border-color: #4ba3cf;
  background: #9acbe4;
}

.float-bar {
  box-sizing: border-box;
  position: absolute;
  top: 245px;
  left: 215px;
  display: flex;
  align-items: center;
  height: 34px;
  padding: 0 3px 0 2px;
  border: 1px solid #a9adae;
  background: #f0f5f6;
}

.grip {
  width: 8px;
  height: 28px;
  margin-right: 7px;
  background: radial-gradient(circle, #a6a6a6 1px, transparent 2px) 0 0 / 4px 4px;
}

.float-type {
  width: 45px;
  height: 26px;
  margin-right: 4px;
}

.float-value {
  width: 62px;
  height: 23px;
  margin-left: 2px;
  padding-right: 4px;
}
</style>
